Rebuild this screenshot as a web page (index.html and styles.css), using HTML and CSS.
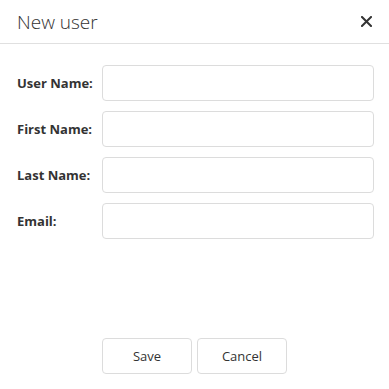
FILE: index.html
```html
<!DOCTYPE html>
<html lang="en">
<head>
  <meta charset="UTF-8" />
  <meta name="viewport" content="width=device-width, initial-scale=1" />
  <title>New user</title>
  <link rel="stylesheet" href="styles.css">
</head>
<body>

  <!-- === Dialog === -->
  <div class="dialog">
    <div class="dialog-header">
      <span class="dialog-title">New user</span>
      <button class="close-btn" type="button" aria-label="Close">
        <svg width="11" height="11" viewBox="0 0 11 11">
          <path d="M1 1 L10 10 M10 1 L1 10" stroke="#333" stroke-width="2" stroke-linecap="square" />
        </svg>
      </button>
    </div>

    <form class="dialog-body">
      <div class="form-row">
        <label for="username">User Name:</label>
        <input id="username" type="text">
      </div>
      <div class="form-row">
        <label for="firstname">First Name:</label>
        <input id="firstname" type="text">
      </div>
      <div class="form-row">
        <label for="lastname">Last Name:</label>
        <input id="lastname" type="text">
      </div>
      <div class="form-row">
        <label for="email">Email:</label>
        <input id="email" type="text">
      </div>
    </form>

    <div class="dialog-footer">
      <button class="btn" type="button">Save</button>
      <button class="btn" type="button">Cancel</button>
    </div>
  </div>

</body>
</html>
```

FILE: styles.css
```css
body {
  margin: 0;
  background: #fff;
  color: #333;
  font-family: 'Open Sans', 'Noto Sans', sans-serif;
}

.dialog {
  display: flex;
  flex-direction: column;
  height: 100vh;
  box-sizing: border-box;
}

/* === Header === */
.dialog-header {
  display: flex;
  align-items: center;
  justify-content: space-between;
  height: 43px;
  padding: 0 17px;
  border-bottom: 1px solid #e0e0e0;
}

.dialog-title {
  font-size: 19px;
  font-weight: 300;
  color: #333;
}

.close-btn {
  background: none;
  border: none;
  padding: 0;
  display: flex;
  cursor: pointer;
}

/* === Form === */
.dialog-body {
  display: flex;
  flex-direction: column;
  gap: 10px;
  padding: 21px 15px 0 17px;
  margin: 0;
}

.form-row {
  display: flex;
  align-items: center;
}

.form-row label {
  width: 85px;
  font-size: 13px;
  font-weight: 700;
  color: #333;
}

.form-row input {
  flex: 1;
  height: 36px;
  box-sizing: border-box;
  border: 1px solid #dcdcdc;
  border-radius: 4px;
  font: inherit;
  padding: 0 8px;
}

/* === Footer === */
.dialog-footer {
  margin-top: auto;
  display: flex;
  justify-content: center;
  gap: 5px;
  padding-bottom: 15px;
}

.btn {
  width: 90px;
  height: 36px;
  background: #fff;
  border: 1px solid #dcdcdc;
  border-radius: 4px;
  font-family: inherit;
  font-size: 13px;
  color: #333;
  cursor: pointer;
}
```
